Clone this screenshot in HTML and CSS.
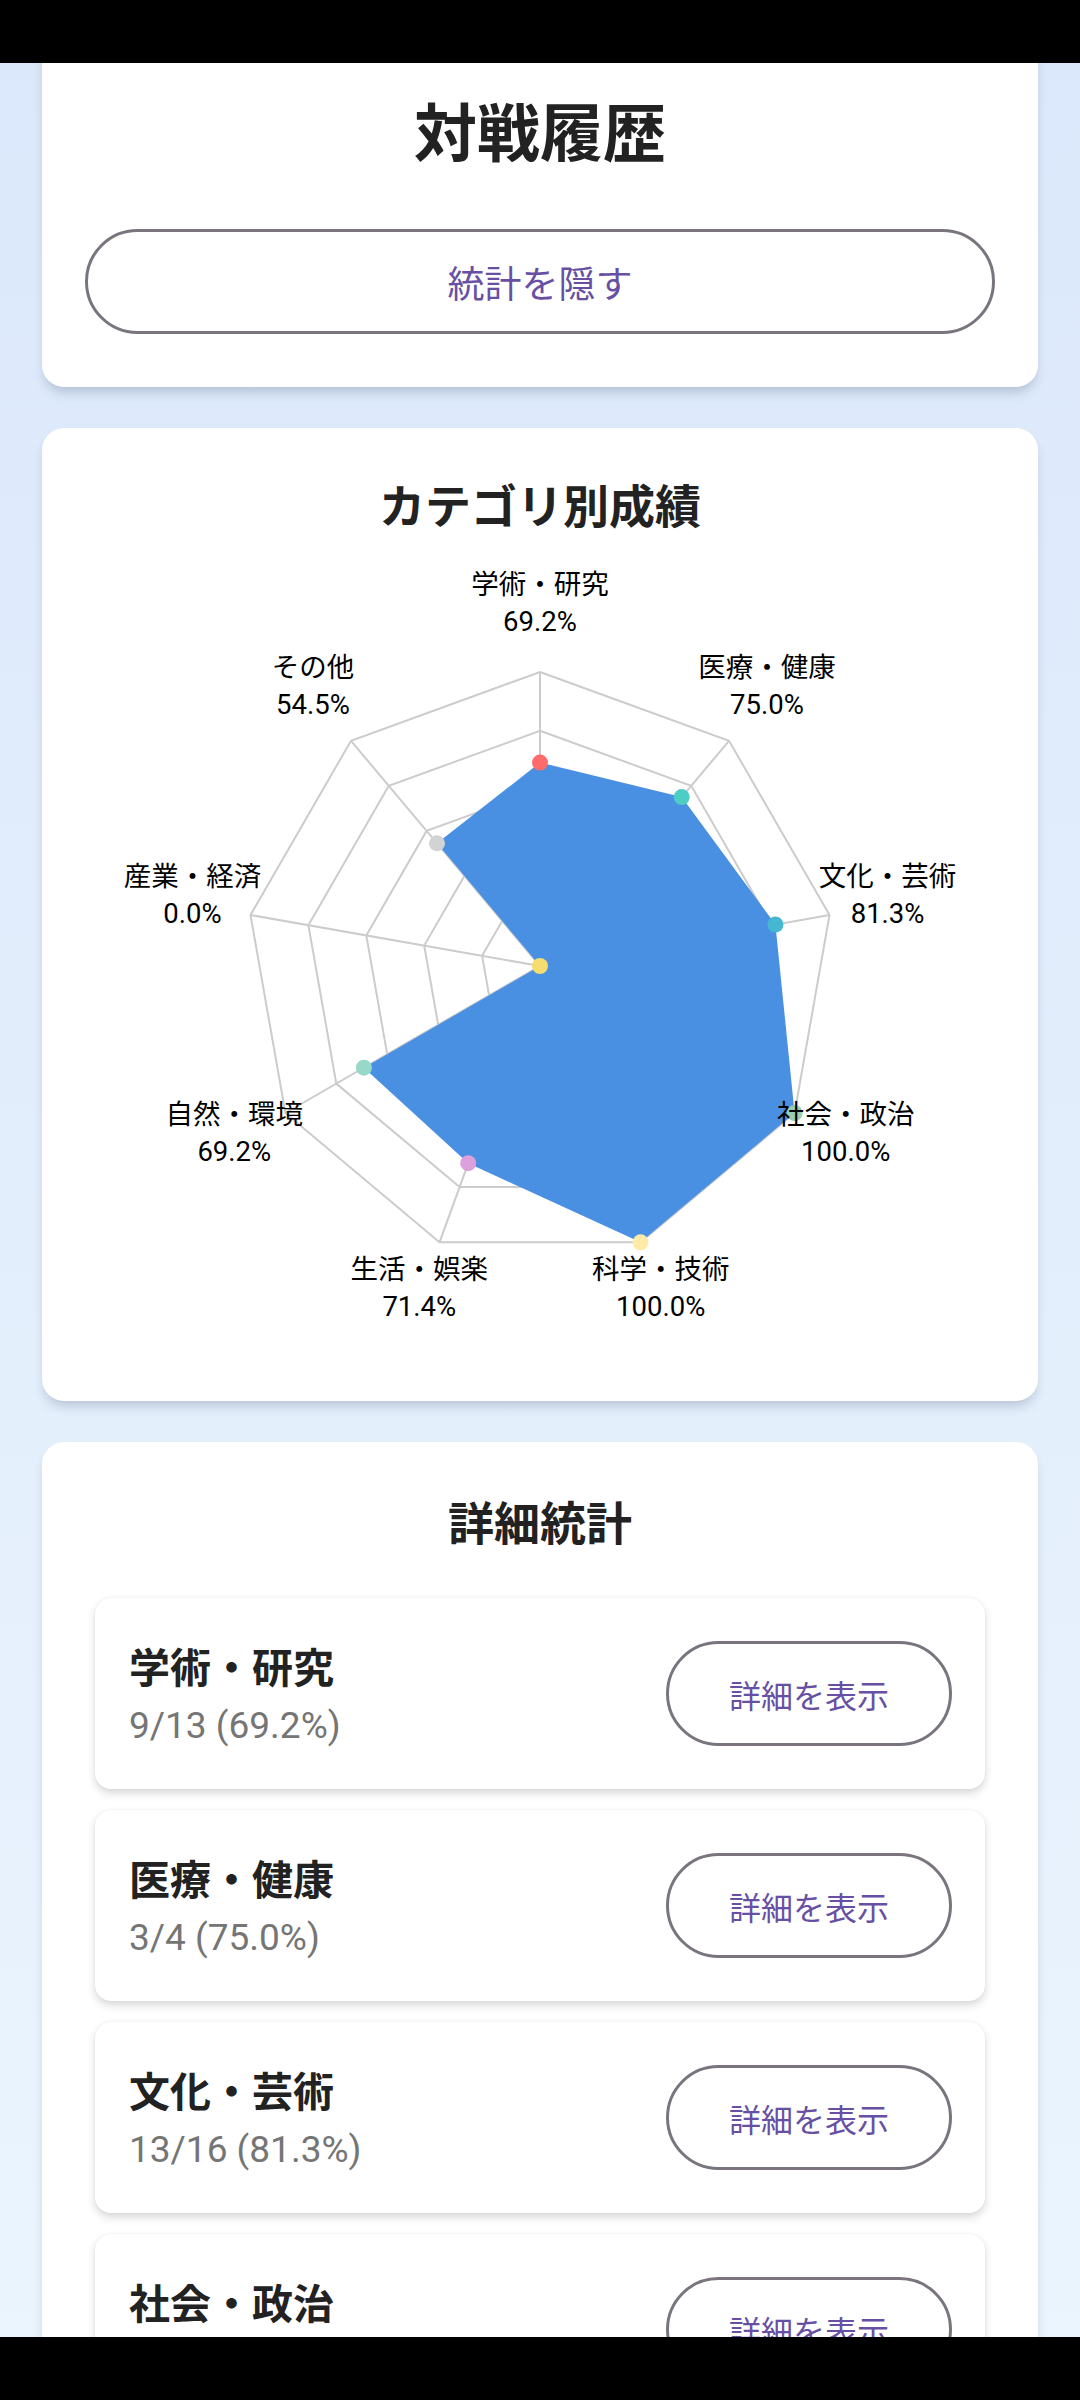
FILE: index.html
```html
<!DOCTYPE html>
<html lang="ja">
<head>
<meta charset="utf-8">
<meta name="viewport" content="width=1080">
<title>対戦履歴</title>
<link rel="stylesheet" href="styles.css">
</head>
<body>
<div class="status-bar"></div>
<main class="page">
  <section class="card card-head">
    <h1 class="page-title">対戦履歴</h1>
    <button class="outline-btn wide-btn" type="button">統計を隠す</button>
  </section>

  <section class="card card-chart">
    <h2 class="card-title">カテゴリ別成績</h2>
    <svg class="radar" width="910" height="800" viewBox="0 0 910 800">
      <g class="grid">
        <polygon points="455,122 644,190.8 744.5,365 709.6,563 555.5,692.3 354.5,692.3 200.4,563 165.5,365 266,190.8"/>
        <polygon points="455,180.8 606.2,235.8 686.6,375.2 658.7,533.6 535.4,637 374.6,637 251.3,533.6 223.4,375.2 303.8,235.8"/>
        <polygon points="455,239.6 568.4,280.9 628.7,385.4 607.8,504.2 515.3,581.8 394.7,581.8 302.2,504.2 281.3,385.4 341.6,280.9"/>
        <polygon points="455,298.4 530.6,325.9 570.8,395.6 556.8,474.8 495.2,526.5 414.8,526.5 353.2,474.8 339.2,395.6 379.4,325.9"/>
        <polygon points="455,357.2 492.8,371 512.9,405.8 505.9,445.4 475.1,471.3 434.9,471.3 404.1,445.4 397.1,405.8 417.2,371"/>
        <line x1="455" y1="416" x2="455" y2="122"/>
        <line x1="455" y1="416" x2="644" y2="190.8"/>
        <line x1="455" y1="416" x2="744.5" y2="365"/>
        <line x1="455" y1="416" x2="709.6" y2="563"/>
        <line x1="455" y1="416" x2="555.5" y2="692.3"/>
        <line x1="455" y1="416" x2="354.5" y2="692.3"/>
        <line x1="455" y1="416" x2="200.4" y2="563"/>
        <line x1="455" y1="416" x2="165.5" y2="365"/>
        <line x1="455" y1="416" x2="266" y2="190.8"/>
      </g>
      <polygon class="area" points="455,212.6 596.7,247.1 690.4,374.5 709.6,563 555.5,692.3 383.2,613.2 278.9,517.7 455,416 352,293.3"/>
      <g class="dots">
        <circle class="dot-c1" cx="455" cy="212.6" r="8"/>
        <circle class="dot-c2" cx="596.7" cy="247.1" r="8"/>
        <circle class="dot-c3" cx="690.4" cy="374.5" r="8"/>
        <circle class="dot-c4" cx="709.6" cy="563" r="8"/>
        <circle class="dot-c5" cx="555.5" cy="692.3" r="8"/>
        <circle class="dot-c6" cx="383.2" cy="613.2" r="8"/>
        <circle class="dot-c7" cx="278.9" cy="517.7" r="8"/>
        <circle class="dot-c8" cx="455" cy="416" r="8"/>
        <circle class="dot-c9" cx="352" cy="293.3" r="8"/>
      </g>
      <g class="labels">
        <text x="455" y="34.5">学術・研究</text><text x="455" y="71.5">69.2%</text>
        <text x="682" y="117">医療・健康</text><text x="682" y="154">75.0%</text>
        <text x="802.6" y="326">文化・芸術</text><text x="802.6" y="363">81.3%</text>
        <text x="760.7" y="564">社会・政治</text><text x="760.7" y="601">100.0%</text>
        <text x="575.7" y="719">科学・技術</text><text x="575.7" y="756">100.0%</text>
        <text x="334.3" y="719">生活・娯楽</text><text x="334.3" y="756">71.4%</text>
        <text x="149.3" y="564">自然・環境</text><text x="149.3" y="601">69.2%</text>
        <text x="107.4" y="326">産業・経済</text><text x="107.4" y="363">0.0%</text>
        <text x="228" y="117">その他</text><text x="228" y="154">54.5%</text>
      </g>
    </svg>
  </section>

  <section class="card card-detail">
    <h2 class="card-title detail-title">詳細統計</h2>
    <ul class="cat-list">
      <li class="cat-item">
        <div class="cat-text"><div class="cat-name">学術・研究</div><div class="cat-score">9/13 (69.2%)</div></div>
        <button class="outline-btn small-btn" type="button">詳細を表示</button>
      </li>
      <li class="cat-item">
        <div class="cat-text"><div class="cat-name">医療・健康</div><div class="cat-score">3/4 (75.0%)</div></div>
        <button class="outline-btn small-btn" type="button">詳細を表示</button>
      </li>
      <li class="cat-item">
        <div class="cat-text"><div class="cat-name">文化・芸術</div><div class="cat-score">13/16 (81.3%)</div></div>
        <button class="outline-btn small-btn" type="button">詳細を表示</button>
      </li>
      <li class="cat-item">
        <div class="cat-text"><div class="cat-name">社会・政治</div><div class="cat-score">7/7 (100.0%)</div></div>
        <button class="outline-btn small-btn" type="button">詳細を表示</button>
      </li>
    </ul>
  </section>
</main>
<div class="nav-bar"></div>
</body>
</html>
```

FILE: styles.css
```css
* { box-sizing: border-box; }

html {
  background: linear-gradient(180deg, #dbe8fb 0%, #e3eefc 50%, #ebf5fe 100%) fixed;
}

body {
  margin: 0;
  font-family: Roboto, "Noto Sans CJK JP", sans-serif;
  color: #222222;
}

.status-bar {
  position: fixed;
  top: 0;
  left: 0;
  right: 0;
  height: 63px;
  background: #000000;
  z-index: 10;
}

.nav-bar {
  position: fixed;
  bottom: 0;
  left: 0;
  right: 0;
  height: 63px;
  background: #000000;
  z-index: 10;
}

.page {
  padding: 35px 42px 80px;
  display: flex;
  flex-direction: column;
  gap: 41px;
}

.card {
  background: #ffffff;
  border-radius: 22px;
  box-shadow: 0 8px 12px -3px rgba(40, 60, 90, 0.24);
}

.card-head {
  padding: 60px 43px 53px;
  display: flex;
  flex-direction: column;
  align-items: stretch;
}

.page-title {
  margin: 0 0 54px;
  font-size: 63px;
  line-height: 80px;
  font-weight: 700;
  text-align: center;
  color: #222222;
}

.outline-btn {
  font-family: Roboto, "Noto Sans CJK JP", sans-serif;
  background: #ffffff;
  border: 3px solid #79747e;
  border-radius: 60px;
  color: #6750a4;
  font-weight: 400;
  cursor: pointer;
}

.wide-btn {
  height: 105px;
  font-size: 37px;
}

.card-chart {
  padding: 49px 43px 51px;
  display: flex;
  flex-direction: column;
  align-items: center;
}

.card-title {
  margin: 0 0 13px;
  font-size: 46px;
  line-height: 60px;
  font-weight: 700;
  text-align: center;
  color: #222222;
}

.radar {
  display: block;
}

.grid polygon,
.grid line {
  fill: none;
  stroke: #cccccc;
  stroke-width: 2;
}

.area {
  fill: #4a90e2;
}

.dot-c1 { fill: #ff6b6b; }
.dot-c2 { fill: #4ecdc4; }
.dot-c3 { fill: #45b7d1; }
.dot-c4 { fill: #96ceb4; }
.dot-c5 { fill: #ffeaa7; }
.dot-c6 { fill: #dda0dd; }
.dot-c7 { fill: #98d8c8; }
.dot-c8 { fill: #f7dc6f; }
.dot-c9 { fill: #d3d3d3; }

.labels text {
  font-family: Roboto, "Noto Sans CJK JP", sans-serif;
  font-size: 27.5px;
  fill: #000000;
  text-anchor: middle;
  dominant-baseline: central;
}

.card-detail {
  padding: 52px 53px 60px;
}

.detail-title {
  margin-bottom: 44px;
}

.cat-list {
  list-style: none;
  margin: 0;
  padding: 0;
  display: flex;
  flex-direction: column;
  gap: 21px;
}

.cat-item {
  height: 191px;
  padding: 0 33px 0 34px;
  background: #ffffff;
  border-radius: 16px;
  box-shadow: 0 4px 8px rgba(0, 0, 0, 0.16), 0 0 2px rgba(0, 0, 0, 0.06);
  display: flex;
  align-items: center;
  justify-content: space-between;
}

.cat-text {
  display: flex;
  flex-direction: column;
  padding-top: 4px;
}

.cat-name {
  font-size: 41px;
  line-height: 56px;
  font-weight: 700;
  color: #222222;
}

.cat-score {
  margin-top: 4px;
  font-size: 37px;
  line-height: 50px;
  color: #757575;
}

.small-btn {
  width: 286px;
  height: 105px;
  font-size: 32px;
}
```
